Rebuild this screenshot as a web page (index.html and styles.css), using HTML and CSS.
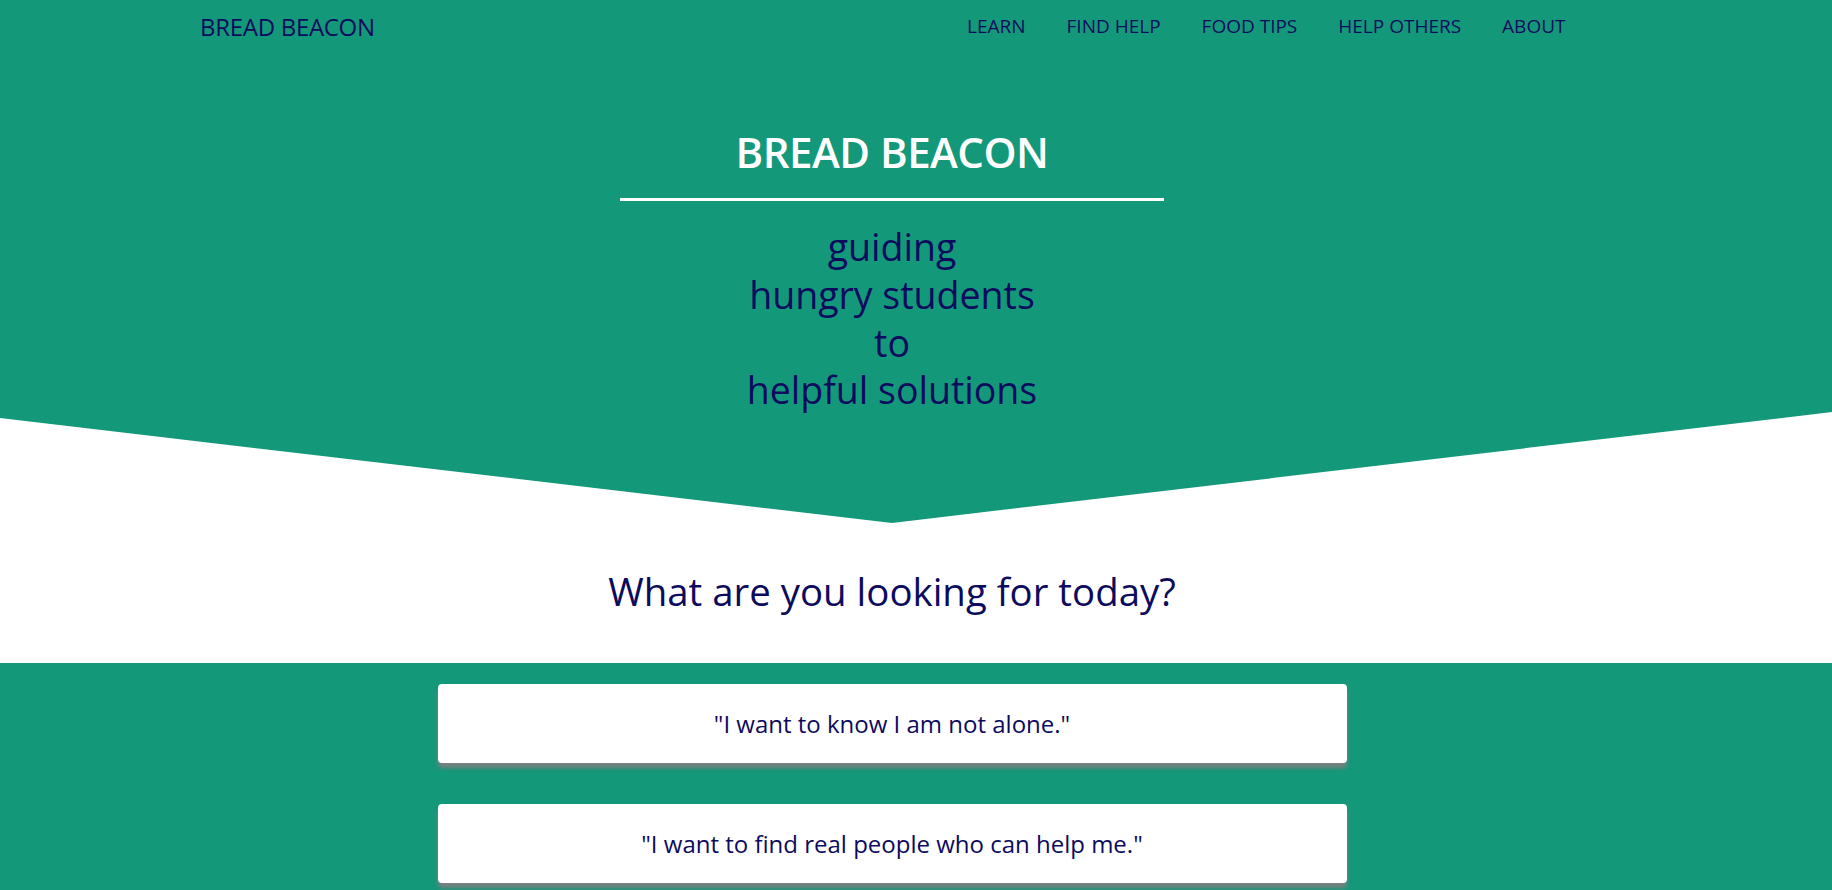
FILE: index.html
```html
<!DOCTYPE html>
<html lang="en">
<head>
<meta charset="utf-8">
<title>Bread Beacon</title>
<link rel="stylesheet" href="styles.css">
</head>
<body>
<header class="top">
  <nav class="nav">
    <a class="brand" href="#">BREAD BEACON</a>
    <ul class="links">
      <li><a href="#">LEARN</a></li>
      <li><a href="#">FIND HELP</a></li>
      <li><a href="#">FOOD TIPS</a></li>
      <li><a href="#">HELP OTHERS</a></li>
      <li><a href="#">ABOUT</a></li>
    </ul>
  </nav>
  <div class="hero">
    <h1 class="hero-title">BREAD BEACON</h1>
    <hr class="hero-rule">
    <p class="tagline">guiding<br>hungry students<br>to<br>helpful solutions</p>
  </div>
</header>
<section class="question">
  <h2>What are you looking for today?</h2>
</section>
<section class="choices">
  <a class="choice" href="#">"I want to know I am not alone."</a>
  <a class="choice" href="#">"I want to find real people who can help me."</a>
</section>
</body>
</html>
```
FILE: styles.css
```css
* { box-sizing: border-box; }
html, body { margin: 0; padding: 0; }
body {
  font-family: "Open Sans", "Noto Sans", sans-serif;
  color: #0d0b5e;
  background: #ffffff;
  overflow: hidden;
}
a { color: inherit; text-decoration: none; }

.top {
  background: #14987a;
  height: 523px;
  padding-right: 48px;
  clip-path: polygon(0 0, 100% 0, 100% 412px, calc(50% - 24px) 523px, 0 418px);
}

.nav {
  height: 52px;
  display: flex;
  align-items: center;
  justify-content: space-between;
  padding: 0 198px 0 200px;
}
.brand {
  font-size: 24px;
  letter-spacing: -0.3px;
}
.links {
  display: flex;
  list-style: none;
  margin: 0;
  padding: 0;
}
.links a {
  display: block;
  padding: 0 20.5px;
  font-size: 19px;
  letter-spacing: 0;
}

.hero {
  display: flex;
  flex-direction: column;
  align-items: center;
  padding-top: 74px;
}
.hero-title {
  margin: 0;
  color: #ffffff;
  font-size: 42px;
  font-weight: 600;
  line-height: 52px;
  letter-spacing: -0.5px;
}
.hero-rule {
  width: 544px;
  height: 3px;
  margin: 20px 0 0;
  border: 0;
  background: #ffffff;
}
.tagline {
  margin: 22px 0 0;
  text-align: center;
  font-size: 37.5px;
  line-height: 47.8px;
}

.question {
  height: 140px;
  padding-right: 48px;
  display: flex;
  justify-content: center;
  align-items: flex-start;
}
.question h2 {
  margin: 44px 0 0;
  font-size: 38.4px;
  font-weight: 400;
  line-height: 48px;
}

.choices {
  background: #14987a;
  padding: 21px 48px 40px 0;
  display: flex;
  flex-direction: column;
  align-items: center;
  gap: 41px;
  min-height: 300px;
}
.choice {
  width: 909px;
  height: 79px;
  display: flex;
  align-items: center;
  justify-content: center;
  background: #ffffff;
  border-radius: 4px;
  font-size: 24px;
  box-shadow: 0 5px 4px rgba(128, 128, 128, 0.95);
}
```
